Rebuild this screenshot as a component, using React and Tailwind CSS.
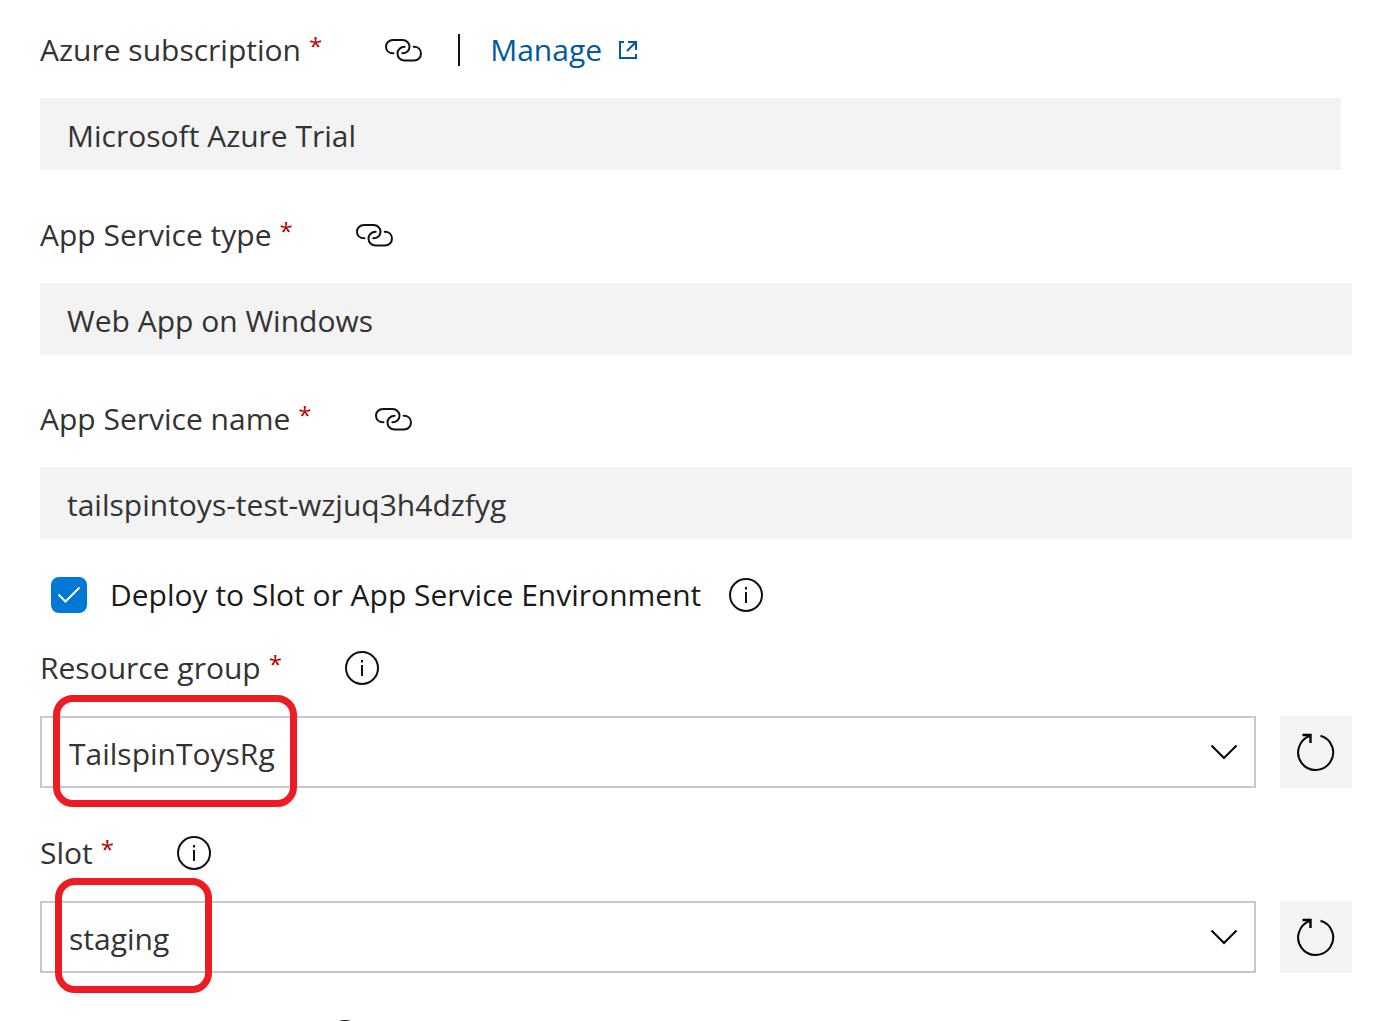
import React from "react";

function LinkIcon() {
  return (
    <svg className="h-6 w-[38px]" viewBox="0 0 38 24" fill="none" stroke="#111" strokeWidth="2" strokeLinecap="round" aria-hidden="true">
      <path d="M9.500 15.300C4.600 15.300 2 12.300 2 8.700S4.800 2 9 2h9.500c4 0 7 2.900 7 6.700S22.400 15.300 18.300 15.300" />
      <path d="M20.700 8.800c-4.100 0-7.200 3-7.200 6.800s3 6.900 7 6.900H30c4 0 7-3.100 7-6.900s-2.800-6.800-7.300-6.800" />
    </svg>
  );
}

function InfoIcon() {
  return (
    <svg className="size-9" viewBox="0 0 36 36" fill="none" stroke="#111" strokeWidth="2" aria-hidden="true">
      <circle cx="18" cy="18" r="16" />
      <path d="M18 15v11M18 10v2.400" />
    </svg>
  );
}

function ExternalIcon() {
  return (
    <svg className="size-5" viewBox="0 0 20 20" fill="none" stroke="#005a9e" strokeWidth="2" aria-hidden="true">
      <path d="M6 2H2v16h16v-4M10 2h8v8M18 2l-9 9" />
    </svg>
  );
}

function RefreshIcon() {
  return (
    <svg className="size-10" viewBox="0 0 40 40" fill="none" stroke="#000" strokeWidth="2" aria-hidden="true">
      <path d="M24.500 3.700A17.500 17.500 0 1 1 14.500 3.800" />
      <path d="M6.500 3H14.500v8" strokeWidth="2.400" />
    </svg>
  );
}

function FieldLabel({ id, text, icon, children }) {
  return (
    <div className="mb-6 flex h-12 items-center">
      <label htmlFor={id} className="flex items-start gap-2 whitespace-nowrap text-[#333]">
        {text}
        <span className="text-2xl leading-10 text-[#b80000]">*</span>
      </label>
      <button type="button" aria-label={`${text} options`} className="ml-[62px] flex">
        {icon}
      </button>
      {children}
    </div>
  );
}

function TextField({ id, value }) {
  return (
    <input id={id} readOnly defaultValue={value} className="block h-[72px] w-full bg-[#f3f3f3] px-[27px] pt-0.5 text-[#333] outline-none" />
  );
}

function SelectField({ id, value, children }) {
  return (
    <div className="flex gap-6">
      <div className="relative flex-1">
        <select id={id} className="block h-[72px] w-full appearance-none border-2 border-[#c8c8c8] bg-white px-[27px] pt-1 text-[#333] outline-none">
          <option>{value}</option>
        </select>
        <svg className="pointer-events-none absolute top-7 right-[18px] h-4 w-7" viewBox="0 0 28 16" fill="none" stroke="#000" strokeWidth="2" aria-hidden="true">
          <path d="M1.500 1.500L14 14 26.500 1.500" />
        </svg>
        {children}
      </div>
      <button type="button" aria-label={`Refresh ${id}`} className="flex size-[72px] items-center justify-center bg-[#f3f3f3]">
        <RefreshIcon />
      </button>
    </div>
  );
}

export default function App() {
  return (
    <main className="h-screen overflow-hidden bg-white pt-[26px] pr-[46px] pl-10 font-['Open_Sans','Noto_Sans',sans-serif] text-[30px] leading-[48px]">
      <section className="mb-[41px]">
        <FieldLabel id="subscription" text="Azure subscription" icon={<LinkIcon />}>
          <span className="ml-9 h-8 w-0.5 bg-[#111]" />
          <a href="#manage" className="ml-[30px] flex items-center gap-4 text-[#005a9e]">
            Manage <ExternalIcon />
          </a>
        </FieldLabel>
        <div className="mr-[11px]">
          <TextField id="subscription" value="Microsoft Azure Trial" />
        </div>
      </section>
      <section className="mb-10">
        <FieldLabel id="type" text="App Service type" icon={<LinkIcon />} />
        <TextField id="type" value="Web App on Windows" />
      </section>
      <section className="mb-8">
        <FieldLabel id="name" text="App Service name" icon={<LinkIcon />} />
        <TextField id="name" value="tailspintoys-test-wzjuq3h4dzfyg" />
      </section>
      <section className="mb-[25px] ml-[11px] flex h-12 items-center">
        <span className="relative flex size-9">
          <input id="deploy" type="checkbox" defaultChecked className="size-9 appearance-none rounded-lg border-2 border-[#0078d4] checked:bg-[#0078d4]" />
          <svg className="pointer-events-none absolute inset-0 size-9" viewBox="0 0 36 36" fill="none" stroke="#fff" strokeWidth="2" aria-hidden="true">
            <path d="M7.500 17.500l7 7L28.500 10.500" />
          </svg>
        </span>
        <label htmlFor="deploy" className="ml-[23px] whitespace-nowrap text-[#1a1a1a]">
          Deploy to Slot or App Service Environment
        </label>
        <button type="button" aria-label="About deployment slots" className="ml-[27px] flex">
          <InfoIcon />
        </button>
      </section>
      <section className="mb-[41px]">
        <FieldLabel id="group" text="Resource group" icon={<InfoIcon />} />
        <SelectField id="group" value="TailspinToysRg">
          <span className="pointer-events-none absolute -top-[21px] left-[13px] h-28 w-[244px] rounded-[20px] border-[7px] border-[#ed1c24]" />
        </SelectField>
      </section>
      <section className="mb-10">
        <FieldLabel id="slot" text="Slot" icon={<InfoIcon />} />
        <SelectField id="slot" value="staging">
          <span className="pointer-events-none absolute -top-[23px] left-[15px] h-[115px] w-[157px] rounded-[20px] border-[7px] border-[#ed1c24]" />
        </SelectField>
      </section>
      <div className="ml-[287px] flex h-12 items-center">
        <button type="button" aria-label="More information" className="flex">
          <InfoIcon />
        </button>
      </div>
    </main>
  );
}
